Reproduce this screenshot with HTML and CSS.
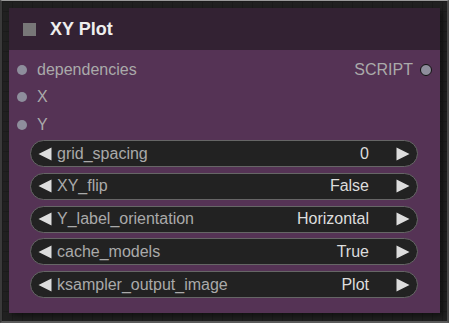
FILE: index.html
```html
<!DOCTYPE html>
<html>
<head>
<meta charset="utf-8">
<link rel="stylesheet" href="styles.css">
</head>
<body>
<div class="canvas">
  <div class="node">
    <div class="title">
      <span class="box"></span>
      <span class="title-text">XY Plot</span>
    </div>
    <div class="body">
      <div class="slots">
        <div class="slot">
          <span class="dot"></span><span class="slot-label">dependencies</span>
          <span class="out-label">SCRIPT</span><span class="dot out"></span>
        </div>
        <div class="slot"><span class="dot"></span><span class="slot-label">X</span></div>
        <div class="slot"><span class="dot"></span><span class="slot-label">Y</span></div>
      </div>
      <div class="widgets">
        <div class="widget">
          <svg class="arrow" width="14" height="14" viewBox="0 0 14 14"><polygon points="13.5,0.5 13.5,13.5 0.5,7" fill="#ddd"/></svg>
          <span class="w-label">grid_spacing</span><span class="w-value">0</span>
          <svg class="arrow r" width="14" height="14" viewBox="0 0 14 14"><polygon points="0.5,0.5 0.5,13.5 13.5,7" fill="#ddd"/></svg>
        </div>
        <div class="widget">
          <svg class="arrow" width="14" height="14" viewBox="0 0 14 14"><polygon points="13.5,0.5 13.5,13.5 0.5,7" fill="#ddd"/></svg>
          <span class="w-label">XY_flip</span><span class="w-value">False</span>
          <svg class="arrow r" width="14" height="14" viewBox="0 0 14 14"><polygon points="0.5,0.5 0.5,13.5 13.5,7" fill="#ddd"/></svg>
        </div>
        <div class="widget">
          <svg class="arrow" width="14" height="14" viewBox="0 0 14 14"><polygon points="13.5,0.5 13.5,13.5 0.5,7" fill="#ddd"/></svg>
          <span class="w-label">Y_label_orientation</span><span class="w-value">Horizontal</span>
          <svg class="arrow r" width="14" height="14" viewBox="0 0 14 14"><polygon points="0.5,0.5 0.5,13.5 13.5,7" fill="#ddd"/></svg>
        </div>
        <div class="widget">
          <svg class="arrow" width="14" height="14" viewBox="0 0 14 14"><polygon points="13.5,0.5 13.5,13.5 0.5,7" fill="#ddd"/></svg>
          <span class="w-label">cache_models</span><span class="w-value">True</span>
          <svg class="arrow r" width="14" height="14" viewBox="0 0 14 14"><polygon points="0.5,0.5 0.5,13.5 13.5,7" fill="#ddd"/></svg>
        </div>
        <div class="widget">
          <svg class="arrow" width="14" height="14" viewBox="0 0 14 14"><polygon points="13.5,0.5 13.5,13.5 0.5,7" fill="#ddd"/></svg>
          <span class="w-label">ksampler_output_image</span><span class="w-value">Plot</span>
          <svg class="arrow r" width="14" height="14" viewBox="0 0 14 14"><polygon points="0.5,0.5 0.5,13.5 13.5,7" fill="#ddd"/></svg>
        </div>
      </div>
    </div>
  </div>
</div>
</body>
</html>
```

FILE: styles.css
```css
html, body {
  margin: 0;
  padding: 0;
  background: #202020;
}
body {
  font-family: "Liberation Sans", Arial, sans-serif;
  width: 449px;
  height: 323px;
  overflow: hidden;
}
.canvas {
  box-sizing: border-box;
  width: 449px;
  height: 323px;
  border-top: 1px solid #9a9a9a;
  border-left: 2px solid #3a3a3a;
  border-right: 2px solid #4a4a4a;
  border-bottom: 2px solid #5a5a5a;
  background-color: #202020;
  background-image:
    linear-gradient(#1b1b1b 1px, transparent 1px),
    linear-gradient(90deg, #1b1b1b 1px, transparent 1px);
  background-size: 10px 10px;
  padding: 7px 0 0 7px;
}
.node {
  width: 431px;
  height: 305px;
  background: #553355;
  box-shadow: 3px 3px 5px rgba(0, 0, 0, 0.45);
  display: flex;
  flex-direction: column;
}
.title {
  height: 42px;
  background: #332233;
  display: flex;
  align-items: center;
  flex: none;
}
.box {
  width: 13px;
  height: 13px;
  background: #777;
  margin-left: 14px;
  margin-right: 14px;
}
.title-text {
  color: #eeeeee;
  font-weight: bold;
  font-size: 18px;
}
.slots {
  padding-top: 6px;
}
.slot {
  height: 27.5px;
  display: flex;
  align-items: center;
  color: #aaaaaa;
  font-size: 16px;
}
.dot {
  width: 10px;
  height: 10px;
  border-radius: 50%;
  background: #8e8e9c;
  margin-left: 8px;
  margin-right: 10px;
  flex: none;
}
.slot-label {
  flex: 1;
}
.out-label {
  margin-right: 7px;
}
.dot.out {
  box-sizing: border-box;
  width: 12px;
  height: 12px;
  border: 1.5px solid #111;
  margin: 0 8px 0 0;
}
.widgets {
  padding: 1.5px 22px 0 21px;
  display: flex;
  flex-direction: column;
  gap: 5.8px;
}
.widget {
  box-sizing: border-box;
  height: 27px;
  border: 1px solid #666;
  border-radius: 14px;
  background: #222222;
  display: flex;
  align-items: center;
  font-size: 16px;
  padding: 0 7px 0 7px;
}
.arrow {
  flex: none;
  width: 14px;
  height: 14px;
}
.arrow.r {
  margin-left: 27px;
}
.w-label {
  color: #aaaaaa;
  margin-left: 5px;
  flex: 1;
  white-space: nowrap;
}
.w-value {
  color: #dddddd;
  white-space: nowrap;
}
```
